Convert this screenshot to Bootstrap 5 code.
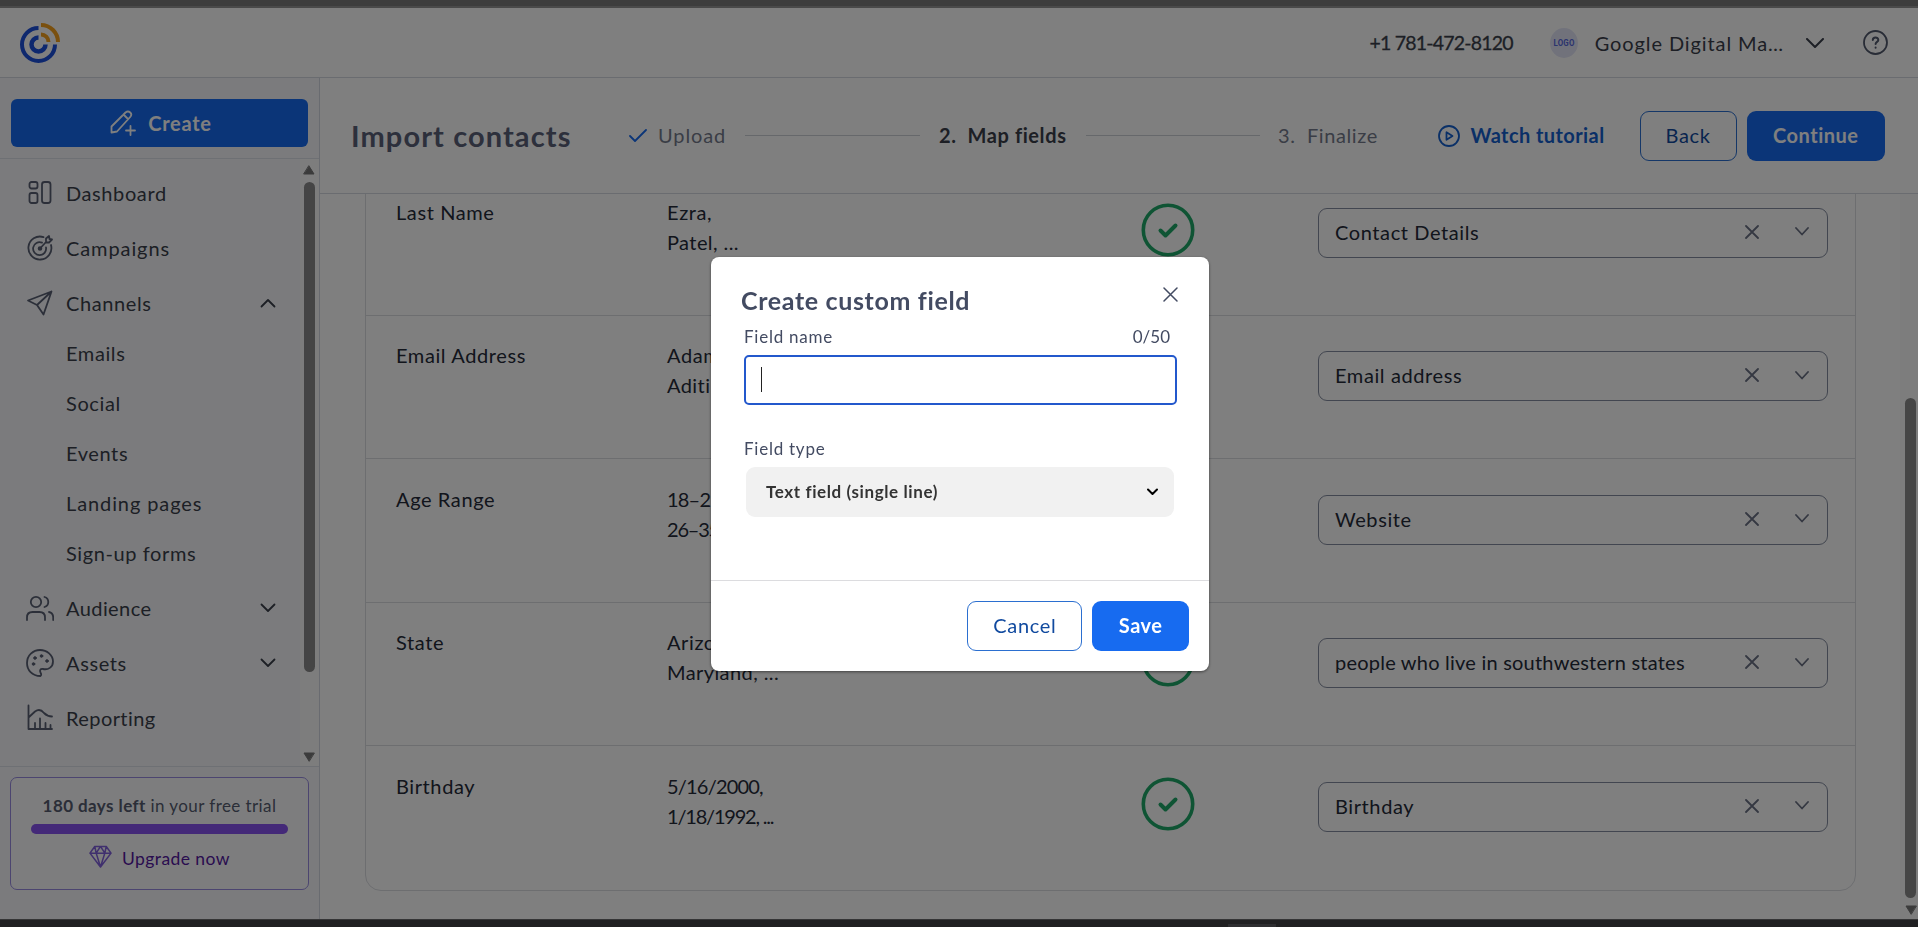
<!DOCTYPE html>
<html lang="en">
<head>
<meta charset="utf-8">
<meta name="viewport" content="width=device-width, initial-scale=1">
<title>Import contacts</title>
<link href="https://cdn.jsdelivr.net/npm/bootstrap@5.3.0/dist/css/bootstrap.min.css" rel="stylesheet">
<style>
html,body{height:100%;overflow:hidden}
body{font:400 20px/30px Lato,"Open Sans",sans-serif;letter-spacing:.6px;color:#3a3f4b;background:#fff}
svg{display:block;flex:none;fill:none;stroke:currentColor;stroke-width:1.8;stroke-linecap:round;stroke-linejoin:round}
.ls-m13{letter-spacing:-1.2px}.ls-m8{letter-spacing:-.8px}.ls-0{letter-spacing:0}.ls-2{letter-spacing:.22px}.ls-4{letter-spacing:.42px}.ls-9{letter-spacing:.9px}
.edge-top{height:8px;background:#7a7a7a;border-bottom:2px solid #949494}
.edge-bottom{height:8px;background:#404044;border-top:1px solid #6a6a6c}
.edge-bottom i{width:48px;height:3px;margin:4px 0 0 1228px;background:#5c5c62;display:block}
.line{border-color:#dde1e8!important}
.topbar{height:70px;padding:0 30px 0 20px;border-bottom:1px solid #d4d8e0}
.brand{stroke-linecap:butt}
.logo-dot{width:30px;height:30px;margin-left:36px;background:#e3e5f7;color:#5668dc;font:700 8.5px/30px "Roboto",sans-serif;letter-spacing:.2px;transform:scaleX(.93)}
.phone{font-size:19.5px;-webkit-text-stroke:.3px}
.sidebar{width:320px;background:#f6f7fa;border-right:1px solid #d2d6e1}
.create{height:48px;margin:21px 11px 11px;background:#176bf0;border-radius:6px;padding:0 0 0 3px;gap:12px;letter-spacing:.7px;font-size:20px}
.create:hover,.create{color:#fff}
.sidenav{width:300px;padding:6px 0 0;list-style:none;margin:0}
.sidenav .item{height:55px;padding:0 24px 0 26px}
.sidenav .item>svg:first-child{width:28px;height:28px;margin-right:12px;color:#585f73}
.subnav{list-style:none;padding:0 0 0 66px;margin:-2.5px 0 2.5px}
.subnav li{height:50px;line-height:50px}
.track{background:#fafafa}
.thumb{background:#8a8a8a;border-radius:6px}
.tri{width:12px;height:10px;fill:#777;stroke:#777;stroke-width:1}
.trial{height:113px;margin:10px;border:1px solid #988be0;border-radius:7px;padding:13px 20px 0;font-size:17px;color:#565d70;background:#fbfbfd}
.trial .progress{height:10px;border-radius:5px;margin-top:3px}
.trial .progress-bar{background:#8853f0}
.upgrade{color:#5418a0;font-size:17.5px;margin-top:10px;gap:10px}
.subhead{height:116px;border-bottom:1px solid #d4d8e0;padding:0 33px 0 31px}
.subhead h1{font-size:29px;line-height:36px;letter-spacing:1.1px;color:#5a6178;width:278px}
.subhead span,.subhead b{padding-bottom:1px}
.step{color:#747b8c}
.rule{height:1px;background:#ccd0d6}
.ui-btn{height:50px;border-radius:9px;font-size:20px;line-height:28px;padding:0 25px 2px;letter-spacing:.65px}
.ui-outline{border:1px solid #2b6fd0;color:#114a9f;background:#fff}
.ui-solid{background:#176bf0;color:#fff;font-weight:700;border:0;letter-spacing:.5px;padding:0 26.5px 2px}
.maptable{width:1491px;margin:-23px 0 29px 45px;border:1px solid #dadce1;border-radius:0 0 16px 16px;color:#242a38}
.maprow{height:143.6px;border-bottom:1px solid #dadce1;padding:25.5px 27px 0 30px}
.maprow:last-child{border:0}
.c1{width:271px;margin-top:-1px}.c2{width:474px;margin-top:-1px}.c3{width:177px;margin-top:5px}
.pick{width:510px;height:50px;margin-top:10px;border:1px solid #858da0;border-radius:9px;padding:0 18px 0 16px}
.pick span{padding-bottom:2px}
.pick svg{color:#6a7184;margin-top:-2px}
.pick svg+svg{margin-left:36px}
.modal-backdrop{z-index:1050}
.modal-dialog{width:498px;max-width:498px;margin:257px 0 0 711px}
.modal-content{height:414px;border:0;border-radius:8px;color:#434b62;box-shadow:0 1px 3px rgba(0,0,0,.5)}
.modal-head{padding:28px 31px 0 30px}
.modal-head svg{margin-top:2px}
.modal-title{font-size:25px;font-weight:700;letter-spacing:.65px;line-height:30px}
.modal-fields{padding:10px 32px 0 33px}
.fsmall{font-size:17px;line-height:24px;letter-spacing:.75px}
.fsmall+div{margin-top:6px}
.name-input{height:50px;border:2px solid #2358cc;border-radius:5px;padding:10px 15px;margin-bottom:32px}
.caret{width:1px;height:25px;background:#222}
.type-select{height:50px;border-radius:9px;background:#f1f1f1;color:#333;font-weight:700;font-size:17px;padding:0 16px 0 20px;margin:0 3px 0 2px}
.modal-footer{height:91px;border-top:1px solid #dcdcdf;padding:0 20px;gap:10px}
</style>
</head>
<body>
<div class="d-flex flex-column vh-100">
  <div class="edge-top flex-shrink-0"></div>
  <header class="topbar d-flex align-items-center flex-shrink-0">
    <svg class="brand" width="40" height="40" viewBox="0 0 40 40"><g stroke="#1d50dd" stroke-width="4"><path d="M18.500 5.000A16.500 16.500 0 1 0 35.000 21.500"/><path d="M18.500 14.500A7 7 0 1 0 25.500 21.500" stroke-width="4.500"/></g><g stroke="#f5a01c" stroke-width="4"><path d="M21 2A17 17 0 0 1 38 19"/><path d="M21 11.500A7.500 7.500 0 0 1 28.500 19"/></g></svg>
    <span class="phone ls-m8 ms-auto">+1 781-472-8120</span>
    <span class="logo-dot rounded-circle text-center">LOGO</span>
    <span class="ms-3 ls-9">Google Digital Ma…</span>
    <svg style="margin-left:22px" width="18" height="10" viewBox="0 0 18 10"><path d="M1 1l8 8 8-8" stroke-width="2"/></svg>
    <svg style="margin-left:39px" width="25" height="25" viewBox="0 0 25 25" color="#50586c"><circle cx="12.500" cy="12.500" r="11.500"/><path d="M9.800 10.100c0-3.400 5.500-3.400 5.500-.2 0 2-2.700 1.900-2.700 4.200M12.600 17.600v.2" stroke-width="2"/></svg>
  </header>
  <div class="d-flex flex-grow-1 overflow-hidden">
    <aside class="sidebar d-flex flex-column flex-shrink-0">
      <div class="border-bottom line flex-shrink-0 d-grid"><button class="btn create fw-bold d-flex align-items-center justify-content-center">
        <svg width="26" height="26" viewBox="0 0 26 26"><path d="M1.500 22.500v-6L15.500 2.500q2.500-2 4.700 0t0 4.500L7 21.500l-5.500 1M13.500 4.500l4.500 4.500M20.500 16v9M16 20.500h9"/></svg>Create</button></div>
      <div class="d-flex flex-grow-1 overflow-hidden">
        <ul class="sidenav">
          <li class="item d-flex align-items-center"><svg viewBox="0 0 28 28"><rect x="3.500" y="3" width="8" height="6.500" rx="2"/><rect x="3.500" y="14" width="8" height="10" rx="2"/><rect x="16" y="3" width="8.500" height="21" rx="2.500"/></svg>Dashboard</li>
          <li class="item d-flex align-items-center ls-9"><svg viewBox="0 0 28 28"><path d="M17.500 3.100A11.500 11.500 0 1 0 25 11M16 8.600A6.500 6.500 0 1 0 20 13.500M14 14.500l6-6.500V4.500l3-2.500.5 3 2.500.5-3 3H20"/><circle cx="14" cy="14.500" r="1.400" fill="currentColor"/></svg>Campaigns</li>
          <li class="item d-flex align-items-center"><svg viewBox="0 0 28 28"><path d="M25.500 2.500L2 11.500l9 4.500 6.500 9.500zM11 16L25.500 2.500"/></svg>Channels<svg class="ms-auto" width="16" height="10" viewBox="0 0 16 10"><path d="M1.500 8.500L8 2l6.500 6.500"/></svg></li>
          <li><ul class="subnav"><li>Emails</li><li>Social</li><li>Events</li><li class="ls-9">Landing pages</li><li>Sign-up forms</li></ul></li>
          <li class="item d-flex align-items-center ls-4"><svg viewBox="0 0 28 28"><circle cx="10" cy="8" r="5.200"/><path d="M1 26v-2.500q0-5.500 5.500-5.500h7q5.500 0 5.500 5.500V26M18.500 3a5.200 5.200 0 0 1 0 10M23 18q4.200 1 4.200 5.500V26"/></svg>Audience<svg class="ms-auto" width="16" height="10" viewBox="0 0 16 10"><path d="M1.500 1.500L8 8l6.500-6.500"/></svg></li>
          <li class="item d-flex align-items-center"><svg viewBox="0 0 28 28"><path d="M14.500 27C6 27 1 21 1 14 1 6.500 7 1 14 1s13 5 13 11.500c0 6-5 8.500-10 7.500-3-.3-3.500 1.500-2.500 3.500.8 1.500 1 3 0 3.500z"/><g fill="currentColor" stroke-width="1"><circle cx="9" cy="9" r="1.300"/><circle cx="15.500" cy="7" r="1.300"/><circle cx="21" cy="12" r="1.300"/><circle cx="7.500" cy="15" r="1.300"/></g></svg>Assets<svg class="ms-auto" width="16" height="10" viewBox="0 0 16 10"><path d="M1.500 1.500L8 8l6.500-6.500"/></svg></li>
          <li class="item d-flex align-items-center ls-4"><svg viewBox="0 0 28 28"><path d="M2.500 1.500V25H26M2.500 13.500l6.500-6q5-3.500 9 1.500 3.500 3.500 8 3.500M9 24v-5M14 24v-9.500M19.500 24v-5M24.500 24v-3"/></svg>Reporting</li>
        </ul>
        <div class="track flex-grow-1 d-flex flex-column align-items-center" style="padding:6px 1px 4px 0">
          <svg class="tri" viewBox="0 0 12 10"><path d="M6 1l5 8H1z"/></svg>
          <div class="thumb flex-shrink-0" style="width:11px;height:490px;margin-top:7px"></div>
          <svg class="tri mt-auto" viewBox="0 0 12 10"><path d="M6 9L1 1h10z"/></svg>
        </div>
      </div>
      <div class="border-top line flex-shrink-0" style="height:153px"><div class="trial text-center">
        <div class="ls-4"><b>180 days left</b> in your free trial</div>
        <div class="progress"><div class="progress-bar w-100"></div></div>
        <div class="upgrade d-flex align-items-center justify-content-center ls-4"><svg style="margin-top:-6px" width="23" height="23" viewBox="0 0 24 24" color="#8060dc"><path d="M6 1.500h12l5 7L12 23 1 8.500zM1 8.500h22M6 1.500l1.500 7L12 23l4.500-14.500 1.500-7M7.500 8.500L12 1.500l4.500 7" stroke-width="1.600"/></svg>Upgrade now</div>
      </div></div>
    </aside>
    <main class="d-flex flex-column flex-grow-1 overflow-hidden">
      <div class="subhead d-flex align-items-center flex-shrink-0">
        <h1 class="fw-bold mb-0">Import contacts</h1>
        <svg width="18" height="14" viewBox="0 0 18 14" color="#176bf0"><path d="M1 7l5 5L17 1"/></svg>
        <span class="step ls-9" style="margin-left:11px;width:87px">Upload</span><i class="rule" style="width:175px"></i>
        <b style="margin-left:19px;width:147px">2.&nbsp; Map fields</b><i class="rule" style="width:174px"></i>
        <span class="step" style="margin-left:18px">3.&nbsp; Finalize</span>
        <a class="ms-auto d-flex align-items-center fw-bold text-decoration-none ls-4" style="gap:10px;color:#1560cf"><svg width="22" height="22" viewBox="0 0 22 22"><circle cx="11" cy="11" r="10"/><path d="M8.500 7.200v7.600l6-3.800z"/></svg><span>Watch tutorial</span></a>
        <button class="btn ui-btn ui-outline" style="margin-left:35px">Back</button>
        <button class="btn ui-btn ui-solid" style="margin-left:10px">Continue</button>
      </div>
      <div class="d-flex flex-grow-1 overflow-hidden">
        <div class="flex-grow-1">
          <div class="maptable" id="rows"></div>
        </div>
        <div class="track d-flex flex-column align-items-center justify-content-end" style="width:18px">
          <div class="thumb" style="width:11px;height:500px;margin:0 0 7px 3px"></div>
          <svg class="tri" style="margin:0 0 4px 3px" viewBox="0 0 12 10"><path d="M6 9L1 1h10z"/></svg>
        </div>
      </div>
    </main>
  </div>
  <div class="edge-bottom flex-shrink-0"><i></i></div>
</div>

<div class="modal-backdrop show"></div>
<div class="modal d-block" tabindex="-1"><div class="modal-dialog"><div class="modal-content">
  <div class="modal-head d-flex justify-content-between">
    <h5 class="modal-title">Create custom field</h5>
    <svg width="15" height="15" viewBox="0 0 15 15"><path d="M1 1l13 13M14 1L1 14" stroke-width="1.500"/></svg>
  </div>
  <div class="modal-fields flex-grow-1">
    <div class="d-flex justify-content-between fsmall"><span>Field name</span><span class="ls-0" style="margin-right:7px">0/50</span></div>
    <div class="name-input"><div class="caret"></div></div>
    <div class="fsmall">Field type</div>
    <div class="type-select d-flex align-items-center justify-content-between">Text field (single line)<svg width="11" height="8" viewBox="0 0 11 8" color="#000"><path d="M1 1.500L5.500 6 10 1.500" stroke-width="2"/></svg></div>
  </div>
  <div class="modal-footer">
    <button class="btn ui-btn ui-outline m-0">Cancel</button>
    <button class="btn ui-btn ui-solid m-0">Save</button>
  </div>
</div></div></div>
<script src="https://cdn.jsdelivr.net/npm/bootstrap@5.3.0/dist/js/bootstrap.bundle.min.js"></script>
<script>
const rows=[
  ['Last Name','Ezra,','Patel, ...','Contact Details'],
  ['Email Address','Adam,','Aditi, ...','Email address'],
  ['Age Range','18–25,','26–35, ...','Website'],
  ['State','Arizona,','Maryland, ...','people who live in southwestern states','ls-2'],
  ['Birthday','5/16/2000,','1/18/1992, ...','Birthday']
];
document.getElementById('rows').innerHTML=rows.map(([n,a,b,f,k])=>{
  const tight=/\d/.test(a);
  return `<div class="maprow d-flex align-items-start">
    <div class="c1">${n}</div>
    <div class="c2"><div class="${tight?'ls-m8':''}">${a}</div><div class="${tight?'ls-m13':'ls-4'}">${b}</div></div>
    <div class="c3"><svg width="54" height="54" viewBox="0 0 54 54" color="#1fa868"><circle cx="27" cy="27" r="24.700" stroke-width="3.600"/><path d="M19.500 27.500l5 5 10-10" stroke-width="4"/></svg></div>
    <div class="pick d-flex align-items-center"><span class="${k||''}">${f}</span>
      <svg class="ms-auto" width="14" height="14" viewBox="0 0 14 14"><path d="M1 1l12 12M13 1L1 13"/></svg>
      <svg width="14" height="9" viewBox="0 0 14 9"><path d="M1 1l6 6.500L13 1"/></svg>
    </div>
  </div>`}).join('');
</script>
</body>
</html>
